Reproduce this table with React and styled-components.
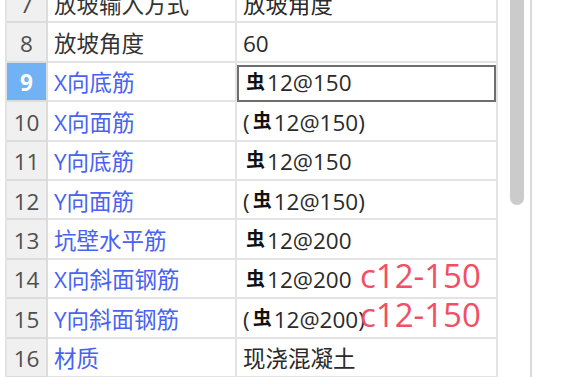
import styled, { createGlobalStyle } from 'styled-components'

const GlobalStyle = createGlobalStyle`
	html, body {
		margin: 0;
		padding: 0;
		background: #ffffff;
		overflow: hidden;
	}
`

//data
const rows = [
	{ no: 7, name: '放坡输入方式', value: '放坡角度' },
	{ no: 8, name: '放坡角度', value: '60' },
	{ no: 9, name: 'X向底筋', bar: true, value: '12@150', blue: true, selected: true },
	{ no: 10, name: 'X向面筋', bar: true, value: '12@150', paren: true, blue: true },
	{ no: 11, name: 'Y向底筋', bar: true, value: '12@150', blue: true },
	{ no: 12, name: 'Y向面筋', bar: true, value: '12@150', paren: true, blue: true },
	{ no: 13, name: '坑壁水平筋', bar: true, value: '12@200', blue: true },
	{ no: 14, name: 'X向斜面钢筋', bar: true, value: '12@200', blue: true, note: 'c12-150' },
	{ no: 15, name: 'Y向斜面钢筋', bar: true, value: '12@200', paren: true, blue: true, note: 'c12-150' },
	{ no: 16, name: '材质', value: '现浇混凝土', blue: true },
]

//css
const Root = styled.div`
	display: flex;
	height: 377px;
	overflow: hidden;
	padding-left: 5px;
	font-family: 'Open Sans', 'Noto Sans CJK SC', sans-serif;
	font-size: 22.5px;
`

const Table = styled.div`
	display: flex;
	flex-direction: column;
	width: 493px;
	margin-top: -16px;
	border-left: 2px solid #e2e2e2;
	flex-shrink: 0;
`

const Row = styled.div`
	display: grid;
	grid-template-columns: 41px 189px 261px;
	height: 39.4px;
	flex-shrink: 0;
`

const Cell = styled.div`
	position: relative;
	box-sizing: border-box;
	display: flex;
	align-items: center;
	padding: 3px 0 0 6px;
	border-right: 2px solid #e3e3e3;
	border-bottom: 2px solid #e3e3e3;
	line-height: 1.2;
	white-space: nowrap;
	color: #2e2e2e;
`

const NoCell = styled(Cell)`
	justify-content: center;
	padding-left: 0;
	background: ${p => (p.$active ? '#70b2f4' : '#f0f0f0')};
	color: ${p => (p.$active ? '#ffffff' : '#4f4f4f')};
	font-weight: ${p => (p.$active ? 700 : 400)};
	border-right-color: #dcdcdc;
	border-bottom-color: #dcdcdc;
`

const NameCell = styled(Cell)`
	color: ${p => (p.$blue ? '#4862f2' : '#333333')};
`

const ValueCell = styled(Cell)`
	color: #2a2a2a;
	&::after {
		content: '';
		display: ${p => (p.$selected ? 'block' : 'none')};
		position: absolute;
		top: 2px;
		left: 0;
		right: 0;
		bottom: -2px;
		border: 2px solid #6e6e6e;
	}
`

const Bar = styled.span`
	font-family: 'Noto Sans CJK SC', sans-serif;
	font-weight: 700;
	font-size: 19px;
	color: #111111;
	margin: -4px 2px 0 3px;
`

const Note = styled.span`
	position: absolute;
	left: 123px;
	top: -1px;
	font-family: 'Open Sans', sans-serif;
	font-size: 33px;
	line-height: 33px;
	color: #f24e64;
`

const Track = styled.div`
	width: 30px;
	flex-shrink: 0;
	box-sizing: border-box;
	padding: 0 6px 0 10px;
`

const Thumb = styled.div`
	width: 14px;
	height: 205px;
	background: #cbcbcb;
	border-radius: 0 0 7px 7px;
`

const Side = styled.div`
	flex: 1;
	border-left: 2px solid #dadada;
`

const App = () => {
	return (
		<>
			<GlobalStyle />
			<Root>
				<Table>
					{rows.map(r => (
						<Row key={r.no}>
							<NoCell $active={r.selected}>{r.no}</NoCell>
							<NameCell $blue={r.blue}>{r.name}</NameCell>
							<ValueCell $selected={r.selected}>
								{r.paren && '('}
								{r.bar && <Bar>虫</Bar>}
								{r.value}
								{r.paren && ')'}
								{r.note && <Note>{r.note}</Note>}
							</ValueCell>
						</Row>
					))}
				</Table>
				<Track>
					<Thumb />
				</Track>
				<Side />
			</Root>
		</>
	)
}

export default App
